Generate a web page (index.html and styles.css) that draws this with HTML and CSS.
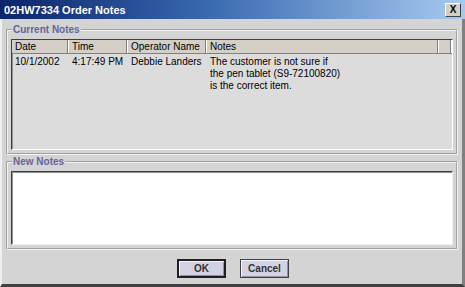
FILE: index.html
```html
<!DOCTYPE html>
<html lang="en">
<head>
  <meta charset="UTF-8" />
  <title>02HW7334 Order Notes</title>
  <link rel="stylesheet" href="styles.css">
</head>
<body>
  <div class="window">
    <div class="titlebar">
      <span class="title">02HW7334 Order Notes</span>
      <span class="close">X</span>
    </div>

    <div class="content">
      <fieldset class="group current">
        <legend>Current Notes</legend>
        <div class="list">
          <div class="list-head">
            <div class="col date">Date</div>
            <div class="col time">Time</div>
            <div class="col oper">Operator Name</div>
            <div class="col notes">Notes</div>
            <div class="col filler"></div>
          </div>
          <div class="list-row">
            <div class="col date">10/1/2002</div>
            <div class="col time">4:17:49 PM</div>
            <div class="col oper">Debbie Landers</div>
            <div class="col notes">The customer is not sure if<br>the pen tablet (S9-72100820)<br>is the correct item.</div>
          </div>
        </div>
      </fieldset>

      <fieldset class="group new">
        <legend>New Notes</legend>
        <div class="note-box"></div>
      </fieldset>

      <div class="buttons">
        <button class="btn default">OK</button>
        <button class="btn">Cancel</button>
      </div>
    </div>
  </div>
</body>
</html>
```

FILE: styles.css
```css
body {
  margin: 0;
  background: #d4d4d4;
  font-family: "Liberation Sans", Arial, sans-serif;
  font-size: 10px;
  color: #000;
}
.window {
  width: 465px;
  height: 287px;
  box-sizing: border-box;
  background: #d4d4d4;
  border-left: 2px solid #f0f0f0;
  border-right: 3px solid #808080;
  border-bottom: 3px solid #404040;
  display: flex;
  flex-direction: column;
}
.titlebar {
  height: 19px;
  margin-left: -2px;
  margin-right: -3px;
  background: linear-gradient(to right, #0a246a, #3a6ab0 45%, #a6caf0);
  display: flex;
  align-items: center;
  justify-content: space-between;
  padding: 0 4px;
}
.title {
  color: #fff;
  font-weight: bold;
  font-size: 11px;
}
.close {
  width: 14px;
  height: 12px;
  background: #d4d0c8;
  border: 1px solid;
  border-color: #fff #404040 #404040 #fff;
  font-size: 10px;
  font-weight: bold;
  line-height: 12px;
  text-align: center;
}
.content {
  flex: 1;
  display: flex;
  flex-direction: column;
  padding: 5px 4px 0 4px;
}
.group {
  margin: 0;
  padding: 3px 3px 3px 3px;
  border: 2px groove #f4f4f4;
}
.group legend {
  color: #64649a;
  font-weight: bold;
  font-size: 10px;
  padding: 0 1px;
  margin-left: 1px;
  line-height: 12px;
}
.list {
  height: 109px;
  background: #dcdcdc;
  border: 1px solid;
  border-color: #404040 #fff #fff #404040;
  box-shadow: inset 1px 1px 0 #909090;
}
.list-head {
  display: flex;
  height: 13px;
  background: #d4d0c8;
  border-bottom: 1px solid #808080;
}
.list-head .col {
  border-right: 1px solid #fff;
  box-shadow: inset -1px 0 0 #808080;
  line-height: 13px;
}
.col {
  box-sizing: border-box;
  padding-left: 3px;
  white-space: nowrap;
}
.date { width: 57px; }
.time { width: 59px; }
.oper { width: 79px; }
.notes { width: 232px; }
.filler { flex: 1; }
.list-row {
  display: flex;
  padding-top: 2px;
  line-height: 12px;
}
.group.new {
  margin-top: 1px;
}
.note-box {
  height: 72px;
  background: #fff;
  border: 1px solid;
  border-color: #404040 #f0f0f0 #f0f0f0 #404040;
  box-shadow: inset 1px 1px 0 #909090;
}
.buttons {
  display: flex;
  justify-content: center;
  gap: 14px;
  margin-top: 9px;
  padding-left: 2px;
}
.btn {
  width: 49px;
  height: 19px;
  background: #d2d2e4;
  border: 1px solid #404040;
  box-shadow: inset 1px 1px 0 #f4f4ff, inset -1px -1px 0 #9090a0;
  font-family: "Liberation Sans", Arial, sans-serif;
  font-size: 10px;
  font-weight: bold;
  color: #333;
  padding: 0;
}
.btn.default {
  border: 2px solid #202020;
}
```
